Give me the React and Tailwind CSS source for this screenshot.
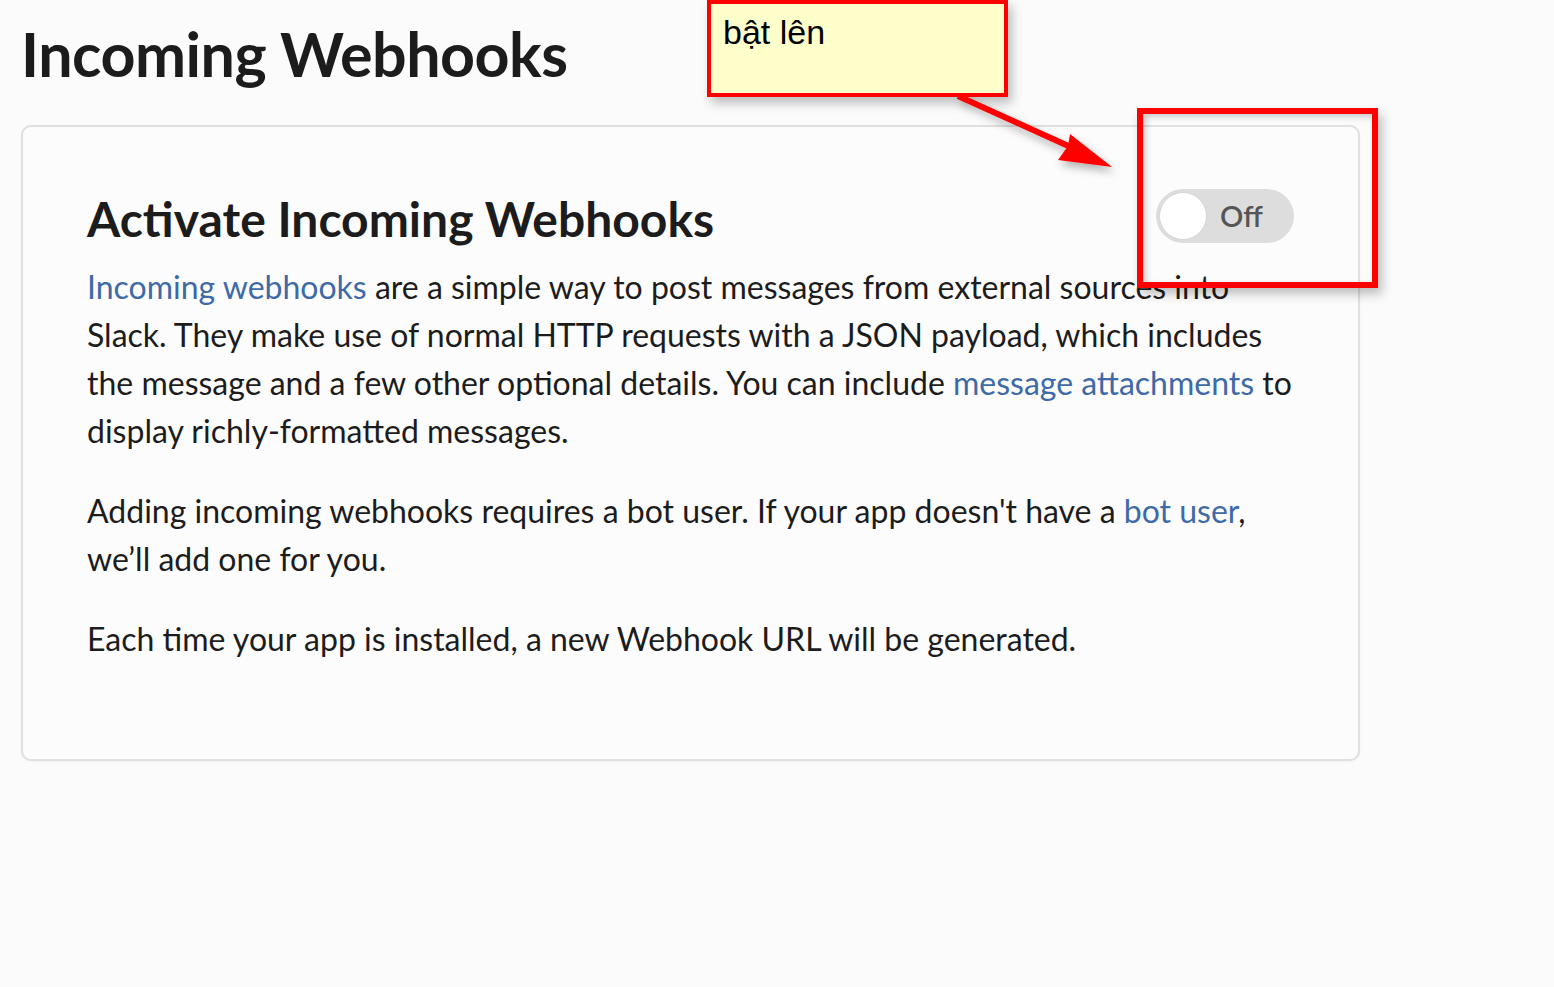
import React from 'react';

const Link = ({ children }) => (
    <a href="#" className="text-[#3e6aa8]">{children}</a>
);

// Toggle switch in its "off" state
const Toggle = () => (
    <div className="flex items-center w-[138px] h-[54px] rounded-full bg-[#dddddd] p-[3px] shrink-0">
        <div className="w-[48px] h-[48px] rounded-full bg-white border border-[#d6d6d6]" />
        <span className="ml-[13px] text-[29px] text-[#555555] font-semibold" style={{ fontFamily: 'Lato, sans-serif' }}>Off</span>
    </div>
);

const App = () => {
    return (
        <div className="relative min-h-[987px] w-full bg-[#fbfbfb] text-[#1d1c1d] overflow-hidden" style={{ fontFamily: 'Lato, "Noto Sans", sans-serif' }}>
            <div className="pl-[21px] pt-[18px] w-[1360px]">
                <h1 className="text-[61px] font-bold leading-[72px] tracking-[-0.5px] text-[#1d1c1d]">Incoming Webhooks</h1>

                <div className="mt-[35px] rounded-[10px] border-2 border-[#e0e0e0] bg-[#fcfcfc] pl-[64px] pr-[64px] pt-[58px] pb-[96px] shadow-[0_1px_3px_rgba(0,0,0,0.04)]">
                    <div className="flex items-start justify-between">
                        <h2 className="text-[48px] font-bold leading-[64px] mt-[2px]">Activate Incoming Webhooks</h2>
                        <div className="mt-[4px]">
                            <Toggle />
                        </div>
                    </div>

                    <div className="w-[1216px] text-[32px] leading-[48px] mt-[12px]">
                        <p>
                            <Link>Incoming webhooks</Link> are a simple way to post messages from external sources into Slack. They make use of normal HTTP requests with a JSON payload, which includes the message and a few other optional details. You can include <Link>message attachments</Link> to display richly-formatted messages.
                        </p>
                        <p className="mt-[32px]">
                            Adding incoming webhooks requires a bot user. If your app doesn't have a <Link>bot user</Link>, we’ll add one for you.
                        </p>
                        <p className="mt-[32px]">
                            Each time your app is installed, a new Webhook URL will be generated.
                        </p>
                    </div>
                </div>
            </div>

            {/* annotation: yellow note */}
            <div className="absolute left-[707px] top-0 w-[301px] h-[97px] bg-[#ffffcc] border-4 border-[#ff0000] shadow-[4px_6px_10px_rgba(0,0,0,0.25)] pl-[12px] pt-[8px]">
                <span className="text-[34px] leading-[40px] text-black" style={{ fontFamily: '"Liberation Sans", Arial, sans-serif' }}>bật lên</span>
            </div>

            {/* annotation: arrow */}
            <svg className="absolute left-0 top-0 pointer-events-none" width="1554" height="987" viewBox="0 0 1554 987">
                <defs>
                    <filter id="sh" x="-20%" y="-20%" width="140%" height="140%">
                        <feDropShadow dx="3" dy="5" stdDeviation="4" floodColor="#000" floodOpacity="0.3" />
                    </filter>
                </defs>
                <g filter="url(#sh)">
                    <line x1="958" y1="96" x2="1075" y2="149" stroke="#ff0000" strokeWidth="6" />
                    <polygon points="1112,167 1058,160 1068,146 1070,134" fill="#ff0000" />
                </g>
            </svg>

            {/* annotation: red frame around the toggle */}
            <div className="absolute left-[1137px] top-[108px] w-[241px] h-[180px] border-[6px] border-[#ff0000] shadow-[4px_6px_10px_rgba(0,0,0,0.25),inset_3px_3px_6px_rgba(0,0,0,0.2)]" />
        </div>
    );
};

export default App;
